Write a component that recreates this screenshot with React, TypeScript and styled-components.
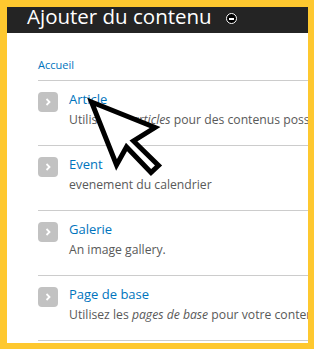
import React from "react";
import styled, { createGlobalStyle } from "styled-components";

const Global = createGlobalStyle`
  html, body { margin: 0; padding: 0; }
  body { background: #fec82f; font-family: "Open Sans", "Noto Sans", sans-serif; }
`;

const Frame = styled.div`
  position: relative;
  width: 314px;
  height: 349px;
  box-sizing: border-box;
  padding: 7px 6px 6px 7px;
  background: #fec82f;
  display: flex;
  flex-direction: column;
  overflow: hidden;
`;

const Header = styled.div`
  height: 26px;
  flex: none;
  background: #242424;
  display: flex;
  align-items: flex-start;
  padding-left: 20px;
  overflow: hidden;
`;

const Title = styled.h1`
  margin: 0;
  font-size: 20.5px;
  line-height: 18px;
  font-weight: 400;
  color: #fff;
  white-space: nowrap;
`;

const Collapse = styled.span`
  flex: none;
  margin: 6px 0 0 14px;
  width: 11px;
  height: 11px;
  box-sizing: border-box;
  border-radius: 50%;
  border: 1.5px solid #fff;
  background: #000;
  display: flex;
  align-items: center;
  justify-content: center;
  &::after {
    content: "";
    width: 5px;
    height: 2px;
    background: #fff;
  }
`;

const Body = styled.div`
  flex: 1;
  background: #fff;
  padding-left: 31px;
  overflow: hidden;
`;

const Breadcrumb = styled.a`
  display: block;
  margin-top: 24px;
  margin-bottom: 7px;
  font-size: 11px;
  line-height: 16px;
  color: #0074bd;
  text-decoration: none;
`;

const List = styled.ul`
  margin: 0;
  padding: 0;
  list-style: none;
`;

const Row = styled.li`
  display: flex;
  gap: 11px;
  border-top: 1px solid #cccccc;
  padding: 9px 0 16px;
  white-space: nowrap;
  &:last-child {
    border-bottom: 1px solid #cccccc;
  }
`;

const Arrow = styled.span`
  flex: none;
  width: 20px;
  height: 20px;
  margin-top: 2px;
  border-radius: 4px;
  background: #c2c2c2;
  display: flex;
  align-items: center;
  justify-content: center;
`;

const Texts = styled.div`
  display: flex;
  flex-direction: column;
  min-width: 0;
`;

const ItemTitle = styled.a`
  font-size: 13px;
  line-height: 18px;
  color: #0074bd;
  text-decoration: none;
`;

const Desc = styled.div`
  margin-top: 3px;
  font-size: 12.2px;
  line-height: 18px;
  color: #595959;
`;

const Cursor = styled.svg`
  position: absolute;
  left: 0;
  top: 0;
  pointer-events: none;
`;

const Chevron = () => (
  <svg width="6" height="8" viewBox="0 0 6 8">
    <path d="M1.5 1 L4.5 4 L1.5 7" fill="none" stroke="#fff" strokeWidth="1.8" />
  </svg>
);

const items: { title: string; desc: React.ReactNode }[] = [
  {
    title: "Article",
    desc: (
      <>
        Utilisez les <em>articles</em> pour des contenus possédant une temporalité
      </>
    ),
  },
  { title: "Event", desc: "evenement du calendrier" },
  { title: "Galerie", desc: "An image gallery." },
  {
    title: "Page de base",
    desc: (
      <>
        Utilisez les <em>pages de base</em> pour votre contenu statique
      </>
    ),
  },
];

export default function App() {
  return (
    <>
      <Global />
      <Frame>
        <Header>
          <Title>Ajouter du contenu</Title>
          <Collapse />
        </Header>
        <Body>
          <Breadcrumb href="#">Accueil</Breadcrumb>
          <List>
            {items.map((it) => (
              <Row key={it.title}>
                <Arrow>
                  <Chevron />
                </Arrow>
                <Texts>
                  <ItemTitle href="#">{it.title}</ItemTitle>
                  <Desc>{it.desc}</Desc>
                </Texts>
              </Row>
            ))}
          </List>
        </Body>
        <Cursor width="314" height="349" viewBox="0 0 314 349">
          <polygon
            points="91.5,102 155,127.5 133.5,141 158.5,165.5 151,172.5 126.5,147 116.5,165"
            fill="#fff"
            stroke="#000"
            strokeWidth="5"
            strokeLinejoin="miter"
            strokeMiterlimit="10"
          />
        </Cursor>
      </Frame>
    </>
  );
}
